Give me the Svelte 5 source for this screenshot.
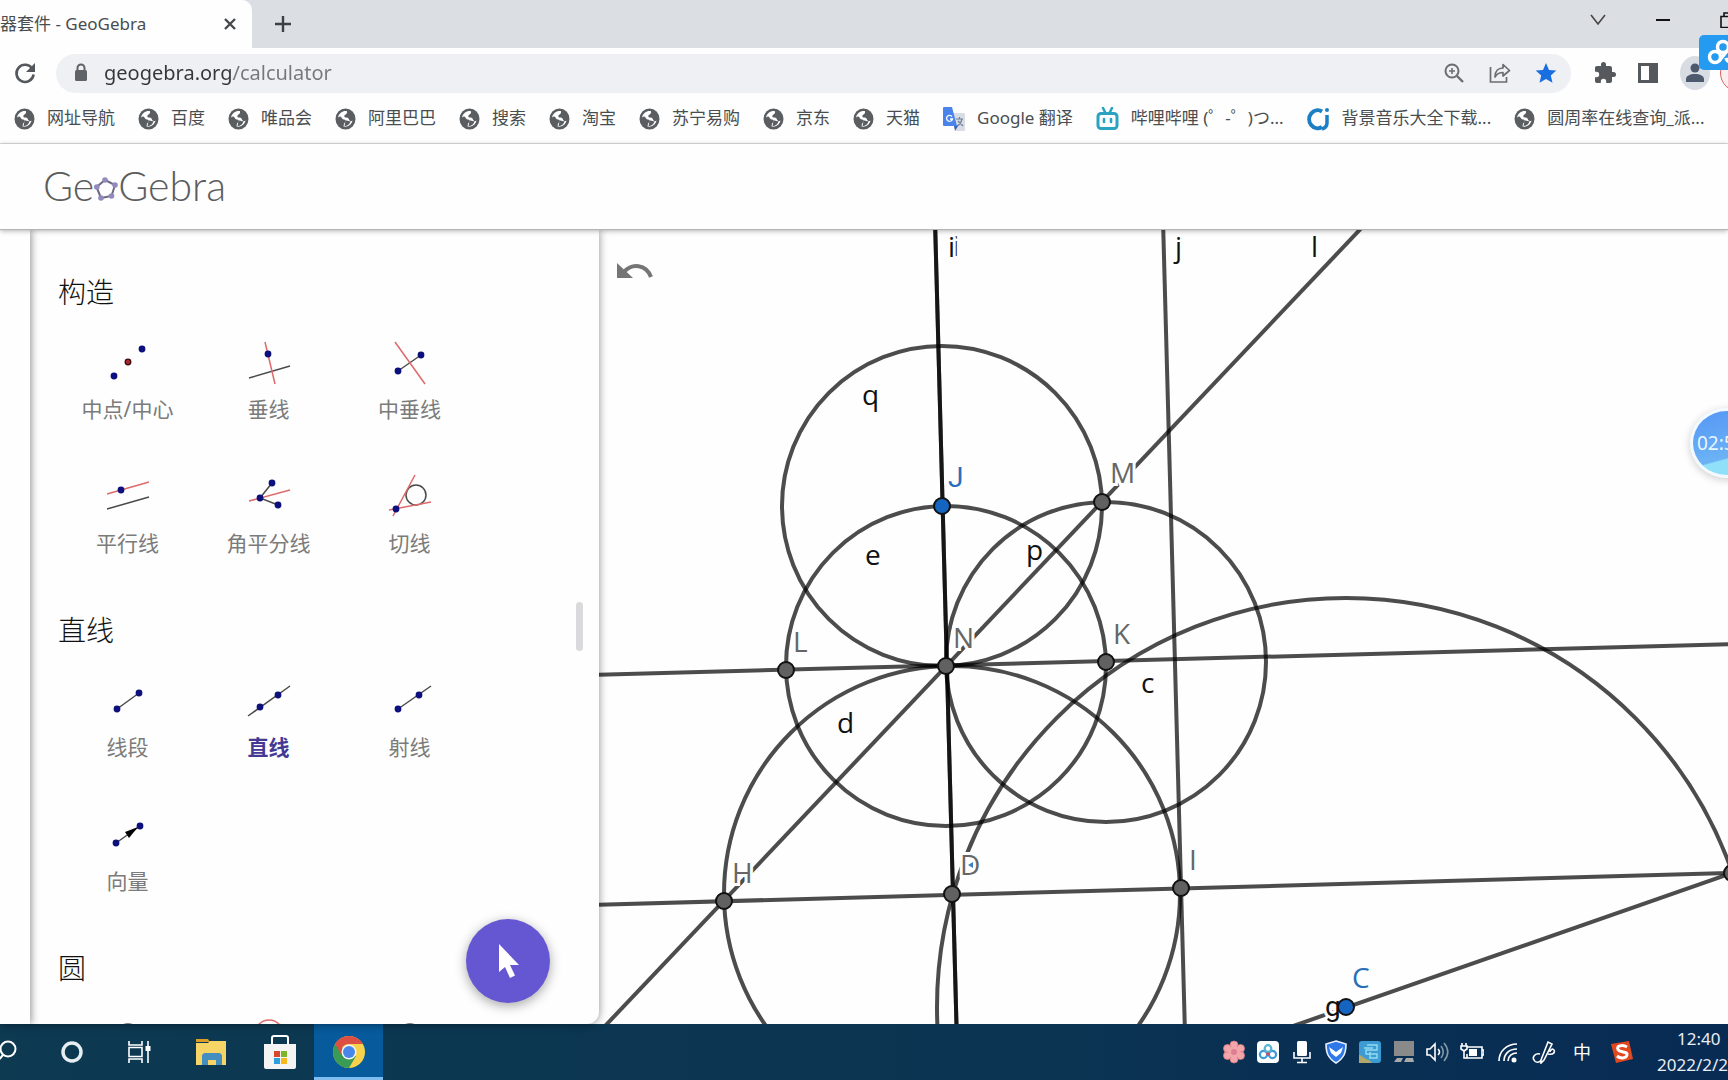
<script>
  const bookmarks = [
    { title: "网址导航" },
    { title: "百度" },
    { title: "唯品会" },
    { title: "阿里巴巴" },
    { title: "搜索" },
    { title: "淘宝" },
    { title: "苏宁易购" },
    { title: "京东" },
    { title: "天猫" },
    { title: "Google 翻译", icon: "translate" },
    { title: "哔哩哔哩 (゜-゜)つ...", icon: "bili" },
    { title: "背景音乐大全下载...", icon: "ci" },
    { title: "圆周率在线查询_派..." },
  ];

  // every tool icon is drawn on a 48x48 grid
  const sections = [
    {
      name: "构造",
      tools: [
        { name: "中点/中心", dots: [[10, 38], [38, 11]], mid: [24, 24] },
        { name: "垂线", dark: ["M4 40 45 28"], red: ["M20 4 30 46"], dots: [[23, 16]] },
        { name: "中垂线", dark: ["M12 33 35 17"], red: ["M9 4 39 46"], dots: [[12, 33], [35, 17]] },
        { name: "平行线", dark: ["M3 37 45 25"], red: ["M3 22 45 10"], dots: [[17, 18]] },
        { name: "角平分线", dark: ["M27 11 15 26 33 33"], red: ["M4 29 45 18"], dots: [[15, 26], [27, 11], [33, 33]] },
        { name: "切线", dark: ["M20 23a10 10 0 1 0 20 0a10 10 0 1 0-20 0"], red: ["M29 3 7 44", "M3 38 45 30"], dots: [[10, 37]] },
      ],
    },
    {
      name: "直线",
      tools: [
        { name: "线段", dark: ["M13 33 35 17"], dots: [[13, 33], [35, 17]] },
        { name: "直线", active: true, dark: ["M3 40 45 10"], dots: [[15, 31], [33, 19]] },
        { name: "射线", dark: ["M12 33 45 10"], dots: [[12, 33], [33, 19]] },
        { name: "向量", dark: ["M12 33 36 16"], arrow: "M34 17 21 22 25 28z", dots: [[12, 33], [36, 16]] },
      ],
    },
    {
      name: "圆",
      tools: [
        { dark: ["M10 24a14 14 0 1 0 28 0a14 14 0 1 0-28 0"] },
        { red: ["M10 20a14 14 0 1 0 28 0a14 14 0 1 0-28 0"] },
        { dark: ["M10 24a14 14 0 1 0 28 0a14 14 0 1 0-28 0"] },
      ],
    },
  ];

  const circles = [
    { name: "q", x: 942, y: 506, r: 160 },
    { name: "e", x: 946, y: 666, r: 160 },
    { name: "p", x: 1106, y: 662, r: 160 },
    { name: "d", x: 952, y: 894, r: 228 },
    { name: "c", x: 1346, y: 1007, r: 409 },
  ];

  const lines = [
    [935, 220, 957, 1044],
    [935, 220, 957, 1044],
    [1163, 220, 1185, 1034],
    [1369, 220, 588, 1044],
    [590, 675, 1740, 644],
    [590, 905, 1732, 873],
    [1732, 873, 1230, 1048],
  ];

  const labels = [
    { t: "i", x: 952, y: 256 },
    { t: "i", x: 948, y: 257 },
    { t: "j", x: 1175, y: 257 },
    { t: "l", x: 1311, y: 257 },
    { t: "q", x: 862, y: 405 },
    { t: "e", x: 865, y: 565 },
    { t: "p", x: 1026, y: 560 },
    { t: "d", x: 837, y: 733 },
    { t: "c", x: 1141, y: 693 },
    { t: "g", x: 1325, y: 1016, kind: "round" },
    { t: "J", x: 948, y: 487, kind: "blue round" },
    { t: "C", x: 1352, y: 988, kind: "blue" },
    { t: "M", x: 1110, y: 483, kind: "gray" },
    { t: "N", x: 953, y: 648, kind: "gray" },
    { t: "K", x: 1113, y: 644, kind: "gray" },
    { t: "L", x: 793, y: 652, kind: "gray" },
    { t: "H", x: 732, y: 883, kind: "gray" },
    { t: "D", x: 960, y: 875, kind: "gray" },
    { t: "I", x: 1189, y: 870, kind: "gray" },
  ];

  const points = [
    { x: 942, y: 506, free: true },
    { x: 1346, y: 1007, free: true },
    { x: 1102, y: 502 },
    { x: 946, y: 666 },
    { x: 1106, y: 662 },
    { x: 786, y: 670 },
    { x: 952, y: 894 },
    { x: 724, y: 901 },
    { x: 1181, y: 888 },
    { x: 1732, y: 873 },
  ];

  let url = "geogebra.org/calculator";
</script>

<div class="screen">
  <div class="tabs">
    <div class="tab">
      <span>器套件 - GeoGebra</span>
      <button aria-label="关闭标签页">
        <svg width="16" height="16" viewBox="0 0 16 16"><path d="M3 3l10 10M13 3L3 13" stroke="#45494d" stroke-width="2.400" /></svg>
      </button>
    </div>
    <button class="new-tab" aria-label="新标签页">
      <svg width="18" height="18" viewBox="0 0 18 18"><path d="M9 1v16M1 9h16" stroke="#3c4043" stroke-width="2.400" /></svg>
    </button>
    <div class="window-buttons">
      <button aria-label="搜索标签页"><svg width="16" height="16" viewBox="0 0 16 16"><path d="M1 3l7 9 7-9" fill="none" stroke="#444" stroke-width="1.6" /></svg></button>
      <button aria-label="最小化"><svg width="16" height="16" viewBox="0 0 16 16"><path d="M1 8h14" stroke="#111" stroke-width="2" /></svg></button>
      <button aria-label="还原"><svg width="16" height="16" viewBox="0 0 16 16"><path d="M1 4.500h11v11H1zM4 4V1h11v11h-3" fill="none" stroke="#111" stroke-width="1.6" /></svg></button>
    </div>
  </div>

  <div class="toolbar">
    <button aria-label="重新加载">
      <svg width="24" height="24" viewBox="0 0 24 24"><path d="M19.500 8A8.600 8.600 0 1 0 20.600 13.500" fill="none" stroke="#54585c" stroke-width="2.600" /><path d="M22 2v9h-9z" fill="#54585c" /></svg>
    </button>
    <div class="omnibox">
      <svg width="14" height="20" viewBox="0 0 14 20"><path d="M3.500 9V5a3.500 3.500 0 0 1 7 0v4" fill="none" stroke="#5f6368" stroke-width="2" /><rect x="1" y="7" width="12" height="11" rx="1.500" fill="#5f6368" /></svg>
      <input aria-label="地址" bind:value={url} />
      <button aria-label="缩放">
        <svg width="22" height="22" viewBox="0 0 22 22" fill="none" stroke="#6a6e73" stroke-width="2"><circle cx="9" cy="9" r="6.500" /><path d="M14 14l6 6" stroke-width="2.400" /><path d="M9 6v6M6 9h6" stroke-width="1.600" /></svg>
      </button>
      <button aria-label="分享">
        <svg width="24" height="22" viewBox="0 0 24 22" fill="none" stroke="#6a6e73" stroke-width="1.700"><path d="M2.500 5v15h16v-5" /><path d="M7 15c0-6 3-9 8-9V2.500L21.500 8.500 15 14v-3.500c-4 0-6 1-8 4.500z" stroke-linejoin="round" /></svg>
      </button>
      <button aria-label="为此标签页添加书签">
        <svg width="22" height="22" viewBox="0 0 22 22"><path d="M11 1l3 7 7.300.600-5.500 4.900 1.700 7.300L11 17l-6.500 3.800 1.700-7.300L.7 8.600 8 8z" fill="#1a6fe0" /></svg>
      </button>
    </div>
    <button aria-label="扩展程序">
      <svg width="24" height="24" viewBox="0 0 24 24"><path d="M20.500 11H19V7c0-1.100-.900-2-2-2h-4V3.500a2.500 2.500 0 0 0-5 0V5H4c-1.100 0-2 .900-2 2v3.800h1.500a2.700 2.700 0 0 1 0 5.400H2V20c0 1.100.900 2 2 2h3.800v-1.500a2.700 2.700 0 0 1 5.400 0V22H17c1.100 0 2-.900 2-2v-4h1.500a2.500 2.500 0 0 0 0-5z" fill="#55595e" /></svg>
    </button>
    <button aria-label="侧边栏">
      <svg width="22" height="22" viewBox="0 0 22 22"><path d="M1 1h20v20H1zM4 4v14h8V4z" fill="#55595e" fill-rule="evenodd" /></svg>
    </button>
    <button class="avatar" aria-label="用户">
      <svg width="20" height="20" viewBox="0 0 20 20" fill="#4d5a6e"><circle cx="10" cy="5" r="4.500" /><path d="M1 19v-3c0-3 4-5 9-5s9 2 9 5v3z" /></svg>
    </button>
    <span class="update"></span>
  </div>

  <nav class="bookmarks">
    {#each bookmarks as mark}
      <a href="#top">
        {#if mark.icon === "translate"}
          <svg width="22" height="24" viewBox="0 0 22 24"><path d="M9 6h12a1 1 0 0 1 1 1v16a1 1 0 0 1-1 1h-8z" fill="#d9dde3" /><path d="M1 0h8l5 19H1a1 1 0 0 1-1-1V1a1 1 0 0 1 1-1z" fill="#4a83ea" /><path d="M11 19h4l-3 5z" fill="#3360c0" /><path d="M9 9.500A3 3 0 1 0 9.500 12H7" fill="none" stroke="#fff" stroke-width="1.300" /><path d="M13 12h7M16.500 10v2M19 12c-1 4-3 6-5 7M15 14l5 5" fill="none" stroke="#6d7f9c" stroke-width="1.200" /></svg>
        {:else if mark.icon === "bili"}
          <svg width="23" height="24" viewBox="0 0 23 24" fill="none" stroke="#2ba3c0" stroke-width="3"><rect x="2" y="6.500" width="19" height="15" rx="3" /><path d="M7 1l2 4M16 1l-2 4M8 12v3M15 12v3" stroke-width="2.600" stroke-linecap="round" /></svg>
        {:else if mark.icon === "ci"}
          <svg width="23" height="24" viewBox="0 0 23 24" fill="none" stroke="#1c7fc4" stroke-width="4"><path d="M15 4.500A8.500 9 0 1 0 15 20" /><path d="M20 8v8c0 3-2 5-5 6" stroke-width="3.500" /><circle cx="20" cy="3" r="2" fill="#1c7fc4" stroke="none" /></svg>
        {:else}
          <svg width="21" height="22" viewBox="0 0 21 22"><ellipse cx="10.500" cy="11" rx="10" ry="10.500" fill="#5a5e61" /><g fill="#fff"><path d="M12 3.200C8 2.500 4 5 3 9.500c1.500-1 2-1.200 3-.500 1 .700 1 2.500 3 2.500 1.500 0 2 1 1.500 2.500L9 15.500l-.500 3c4 .800 8-1.500 9-6-1.500 1-3 .500-3.500-1-.500-1.600-1.500-2-3-2-1.300 0-2-.600-1.500-2C10 6 12.500 6.500 12 3.200z" /></g><path d="M10.500 12.500c2 0 3 1 5 .500-.500 3-3 5-6 5l.500-2.500z" fill="#5a5e61" /></svg>
        {/if}
        <span>{mark.title}</span>
      </a>
    {/each}
  </nav>

  <header>
    <div class="logo">
      Ge<svg width="24" height="24" viewBox="0 0 24 24" aria-label="o"><path d="M11 3l10 5-3.500 11L7 21 2.500 10z" fill="none" stroke="#6c6a80" stroke-width="2" /><g fill="#9389bd"><circle cx="11" cy="3" r="2.800" /><circle cx="21" cy="8" r="2.800" /><circle cx="17.500" cy="19" r="2.800" /><circle cx="7" cy="21" r="2.800" /><circle cx="2.800" cy="10" r="2.800" /></g></svg>Gebra
    </div>
  </header>

  <main>
    <div class="rail"></div>
    <aside>
      {#each sections as section}
        <h2>{section.name}</h2>
        <div class="tools">
          {#each section.tools as tool}
            <button class:active={tool.active} aria-label={tool.name ?? section.name}>
              <svg width="48" height="48" viewBox="0 0 48 48" fill="none">
                {#each tool.dark ?? [] as d}
                  <path {d} stroke="#4a4a4a" stroke-width="1.500" />
                {/each}
                {#each tool.red ?? [] as d}
                  <path {d} stroke="#e0696b" stroke-width="1.500" />
                {/each}
                {#if tool.arrow}
                  <path d={tool.arrow} fill="#000" />
                {/if}
                {#each tool.dots ?? [] as [cx, cy]}
                  <circle {cx} {cy} r="3.400" fill="#0d0f7c" />
                {/each}
                {#if tool.mid}
                  <circle cx={tool.mid[0]} cy={tool.mid[1]} r="2.800" fill="#a8282c" stroke="#3b0c10" stroke-width="1.300" />
                {/if}
              </svg>
              {#if tool.name}
                <span>{tool.name}</span>
              {/if}
            </button>
          {/each}
        </div>
      {/each}
      <div class="thumb"></div>
      <button class="fab" aria-label="移动">
        <svg width="24" height="36" viewBox="0 0 24 36"><path d="M3 1v28l6-5 5 11 5-2.500-5-10.500h9z" fill="#fff" /></svg>
      </button>
    </aside>

    <section class="canvas">
      <svg class="drawing" viewBox="599 230 1129 794" preserveAspectRatio="xMinYMin slice">
        <g class="strokes">
          {#each lines as [x1, y1, x2, y2]}
            <line {x1} {y1} {x2} {y2} />
          {/each}
          {#each circles as c}
            <circle cx={c.x} cy={c.y} r={c.r} />
          {/each}
        </g>
        {#each labels as label}
          <text x={label.x} y={label.y} class={label.kind}>{label.t}</text>
        {/each}
        <path d="M968 865l5-3v6z" fill="#3b7fc4" />
        {#each points as p}
          <circle class="point" class:free={p.free} cx={p.x} cy={p.y} r="8" />
        {/each}
      </svg>
      <button class="undo" aria-label="撤销">
        <svg width="38" height="20" viewBox="0 0 38 20"><path d="M1 1v15h16z" fill="#757575" /><path d="M8 10C16 1 30 2 35 15" fill="none" stroke="#757575" stroke-width="4" /></svg>
      </button>
    </section>
  </main>

  <footer>
    <div class="apps">
      <button aria-label="搜索"><svg width="34" height="34" viewBox="0 0 34 34" fill="none" stroke="#fff" stroke-width="2"><circle cx="21" cy="14" r="7.500" /><path d="M16 20l-8 9" /></svg></button>
      <button aria-label="Cortana"><svg width="34" height="34" viewBox="0 0 34 34"><circle cx="16" cy="17" r="9" fill="none" stroke="#e6eef3" stroke-width="3.500" /></svg></button>
      <button aria-label="任务视图"><svg width="34" height="34" viewBox="0 0 34 34" fill="none" stroke="#fff" stroke-width="1.600"><path d="M4 6v4h13V6M4 12.500h13v9H4zM4 28v-4h13v4M23 6v22" /><path d="M20.500 11h5v5h-5z" fill="#fff" stroke="none" /></svg></button>
      <button aria-label="文件资源管理器"><svg width="34" height="34" viewBox="0 0 34 34"><path d="M2 4h12l2 3H2z" fill="#dc9d25" /><path d="M2 8h12l2-2h16v24H2z" fill="#f7d466" /><path d="M8 30V20l2-2h16l2 2v10h-6v-5h-8v5z" fill="#458fc0" /></svg></button>
      <button aria-label="Microsoft Store"><svg width="34" height="36" viewBox="0 0 34 36"><path d="M9 12V4a2 2 0 0 1 2-2h12a2 2 0 0 1 2 2v8" fill="none" stroke="#fff" stroke-width="2" /><path d="M1 10h32v23a2 2 0 0 1-2 2H3a2 2 0 0 1-2-2z" fill="#f4f4f4" /><path d="M11 17h6v6h-6z" fill="#d8472c" /><path d="M18 17h6v6h-6z" fill="#7fb52a" /><path d="M11 24h6v6h-6z" fill="#2ba0dc" /><path d="M18 24h6v6h-6z" fill="#f4b91d" /></svg></button>
      <button class="running" aria-label="Chrome">
        <svg width="34" height="34" viewBox="0 0 34 34"><circle cx="17" cy="17" r="16" fill="#f8d24b" /><path d="M17 17L3.100 9A16 16 0 0 0 17 33l7-12z" fill="#3a9b55" /><path d="M3.100 9A16 16 0 0 1 30.900 9H17a8 8 0 0 0-7 12z" fill="#dd4f42" /><circle cx="17" cy="17" r="7.500" fill="#f4f4f4" /><circle cx="17" cy="17" r="6" fill="#4886ea" /></svg>
      </button>
    </div>
    <div class="tray">
      <svg viewBox="0 0 24 24"><g fill="#f2a6aa" stroke="#d97880" stroke-width=".8"><circle cx="12" cy="5" r="4" /><circle cx="18.500" cy="8.500" r="4" /><circle cx="18.500" cy="15.500" r="4" /><circle cx="12" cy="19" r="4" /><circle cx="5.500" cy="15.500" r="4" /><circle cx="5.500" cy="8.500" r="4" /></g><circle cx="12" cy="12" r="6" fill="#f2a6aa" /><circle cx="12" cy="12" r="3" fill="#dc7f93" /></svg>
      <svg viewBox="0 0 24 24"><rect x="1" y="1" width="22" height="22" rx="4" fill="#fff" /><g fill="none" stroke-width="2.200"><circle cx="7.500" cy="14.500" r="3.600" stroke="#3a9dd8" /><circle cx="16.500" cy="14.500" r="3.600" stroke="#3a9dd8" /><circle cx="12" cy="8.500" r="3.300" stroke="#58b4cf" /></g><circle cx="12" cy="14" r="1.800" fill="#d9485a" /></svg>
      <svg viewBox="0 0 24 24"><rect x="7" y="1" width="10" height="15" rx="1.500" fill="#fff" /><path d="M4 12v6h16v-6M12 18v4M7 22.500h10" fill="none" stroke="#fff" stroke-width="1.600" /></svg>
      <svg viewBox="0 0 24 24"><path d="M12 1l10 3c0 9-2 14-10 19C4 18 2 13 2 4z" fill="#2e78e8" stroke="#e9f1ff" stroke-width="1.600" /><path d="M5 7l7 5 7-5-2 6-5 4-5-4z" fill="#fff" /></svg>
      <svg viewBox="0 0 24 24"><rect x="1" y="1" width="22" height="22" rx="3" fill="#3d9bd3" /><path d="M1 23V15c3 0 5 4 10 5l3 3z" fill="#b3a869" /><path d="M9 5h10v5H8v4h11v4h-8M6 8h9M12 12v6" fill="none" stroke="#93dcf3" stroke-width="1.400" /></svg>
      <svg viewBox="0 0 24 24"><path d="M2 1h20v15H2z" fill="#8a8a8a" /><path d="M2 22l3-4h6l-2 4zM12 22l2-4h7l1 4z" fill="#aaa" /></svg>
      <svg viewBox="0 0 24 24" fill="none" stroke="#fff" stroke-width="1.600"><path d="M1 9h3l5-5v16l-5-5H1z" /><path d="M12 9c2 2 2 4 0 6" /><path d="M15 6c3 4 3 8 0 12M18 3c5 6 5 12 0 18" stroke-opacity=".5" /></svg>
      <svg viewBox="0 0 24 24" fill="none" stroke="#fff" stroke-width="1.600"><path d="M7 7h15v11H7v-4" /><path d="M22 10h2v5h-2" /><path d="M9 9h8v7H9z" fill="#fff" stroke="none" /><path d="M2 3v3M6 3v3M1 6h6v3L4 11 1 9zM4 11v7h3" /></svg>
      <svg viewBox="0 0 24 24" fill="none" stroke="#fff" stroke-width="1.700"><path d="M3 21C3 11 11 4 21 4M8 21C8 14 13 9 21 9M12 21c0-5 4-8 9-8" /><circle cx="18" cy="20" r="2.500" fill="#fff" stroke="none" /></svg>
      <svg viewBox="0 0 24 24" fill="none" stroke="#fff" stroke-width="1.600"><path d="M9 20L16 2l4 2-8 16-3 3zM8 14c-5-1-8 3-6 6 2 4 6 2 7 0M16 14c6 1 7-2 6-4s-4 0-4 2" /></svg>
      <span class="ime">中</span>
      <svg viewBox="0 0 24 24"><path d="M1 4l18-3 4 18-17 4z" fill="#e2481f" /><path d="M17 7C12 4 6 6 8 9.500s10 1.500 9 5.500-7 3.500-10 1" fill="none" stroke="#fff" stroke-width="3" /></svg>
      <div class="clock">
        <time>12:40</time>
        <span>2022/2/2</span>
      </div>
    </div>
  </footer>

  <div class="cloud">
    <svg width="36" height="28" viewBox="0 0 36 28" fill="none" stroke="#fff" stroke-width="3.500"><circle cx="9" cy="18" r="5.500" /><circle cx="17" cy="8" r="5.500" /><path d="M13 22l8-10M20 19c1 4 5 5 9 4" /></svg>
  </div>
  <div class="timer">02:5</div>
</div>

<style>
  :global(body) {
    margin: 0;
    background: #fdfefd;
  }
  .screen {
    position: relative;
    display: flex;
    flex-direction: column;
    height: 100vh;
    overflow: hidden;
    font-family: "Noto Sans", "Noto Sans CJK SC", sans-serif;
    color: #4a4d50;
  }
  button {
    display: flex;
    align-items: center;
    justify-content: center;
    flex-shrink: 0;
    padding: 0;
    border: 0;
    background: none;
    font-family: inherit;
    cursor: pointer;
  }
  svg {
    flex-shrink: 0;
  }

  .tabs {
    display: flex;
    flex-shrink: 0;
    height: 48px;
    background: #dbdfe4;
  }
  .tab {
    display: flex;
    align-items: center;
    justify-content: space-between;
    width: 252px;
    box-sizing: border-box;
    padding-right: 14px;
    border-radius: 0 10px 0 0;
    background: #fdfefd;
    font-size: 17px;
    line-height: 24px;
    white-space: nowrap;
  }
  .tab span {
    padding-bottom: 1px;
  }
  .new-tab {
    width: 62px;
    border-radius: 0 0 0 10px;
  }
  .window-buttons {
    display: flex;
    align-items: center;
    gap: 49px;
    height: 40px;
    margin-left: auto;
    margin-right: -8px;
  }

  .toolbar {
    display: flex;
    align-items: center;
    flex-shrink: 0;
    gap: 22px;
    height: 50px;
    padding-left: 13px;
    background: #fdfefd;
  }
  .toolbar > button:first-child {
    margin-right: -3px;
  }
  .omnibox {
    display: flex;
    align-items: center;
    flex: 1;
    gap: 23px;
    height: 39px;
    min-width: 0;
    box-sizing: border-box;
    padding: 0 14px 0 18px;
    border-radius: 20px;
    background: #eef0f3;
  }
  .omnibox input {
    flex: 1;
    min-width: 0;
    margin-left: -7px;
    padding: 0;
    border: 0;
    outline: 0;
    font: 20px/28px "Noto Sans", sans-serif;
    color: transparent;
    background: linear-gradient(90deg, #33373b 129px, #74787c 129px);
    background-clip: text;
  }
  .omnibox + button {
    margin-right: -2px;
  }
  .avatar {
    width: 30px;
    height: 34px;
    margin-left: -1px;
    border-radius: 50%;
    background: #d8dde4;
  }
  .update {
    flex-shrink: 0;
    width: 36px;
    height: 36px;
    margin: 0 -30px 0 -12px;
    border: 1px solid #d8635f;
    border-radius: 50%;
    background: #fbeeee;
  }

  .bookmarks {
    display: flex;
    align-items: center;
    flex-shrink: 0;
    gap: 23px;
    height: 46px;
    box-sizing: border-box;
    padding: 0 0 3px 14px;
    border-bottom: 1px solid #dcdfdf;
    white-space: nowrap;
  }
  .bookmarks a {
    display: flex;
    align-items: center;
    gap: 12px;
    font-size: 17px;
    line-height: 24px;
    color: #4a4d50;
    text-decoration: none;
  }
  .bookmarks span {
    padding-bottom: 2px;
  }

  header {
    position: relative;
    z-index: 2;
    display: flex;
    align-items: center;
    flex-shrink: 0;
    height: 85px;
    padding-left: 43px;
    border-bottom: 1px solid #b4b4b4;
    background: #fdfefd;
    box-shadow: 0 1px 5px rgba(0, 0, 0, 0.3);
  }
  .logo {
    display: flex;
    align-items: center;
    padding-bottom: 2px;
    font: 300 41px/44px Lato, sans-serif;
    color: #5c5c5c;
  }
  .logo svg {
    margin-top: 6px;
  }

  main {
    display: flex;
    flex: 1;
    min-height: 0;
  }
  .rail {
    position: relative;
    z-index: 1;
    flex-shrink: 0;
    width: 30px;
    background: #fdfefd;
    box-shadow: 1px 0 8px rgba(0, 0, 0, 0.45);
  }
  aside {
    position: relative;
    flex-shrink: 0;
    width: 569px;
    box-sizing: border-box;
    padding: 27px 0 0 28px;
    overflow: hidden;
    border-radius: 0 0 12px 0;
    background: #fdfefd;
    box-shadow: 0 0 8px rgba(0, 0, 0, 0.45);
  }
  h2 {
    margin: 0;
    font-size: 28px;
    line-height: 70px;
    font-weight: 300;
    color: #111;
  }
  .tools {
    display: grid;
    grid-template-columns: repeat(3, 141px);
    margin-left: -1px;
  }
  .tools button {
    flex-direction: column;
    justify-content: flex-start;
    gap: 9px;
    height: 134px;
    padding-top: 11px;
    font-size: 21px;
    line-height: 28px;
    color: #7b7b7b;
  }
  .tools .active {
    font-weight: 700;
    color: #443a94;
  }
  .thumb {
    position: absolute;
    top: 372px;
    right: 16px;
    width: 7px;
    height: 49px;
    border-radius: 4px;
    background: #dadadc;
  }
  .fab {
    position: absolute;
    right: 49px;
    bottom: 21px;
    width: 84px;
    height: 84px;
    border-radius: 50%;
    background: #6557d2;
    box-shadow: 0 3px 12px rgba(0, 0, 0, 0.35);
  }

  .canvas {
    position: relative;
    z-index: -1;
    flex: 1;
    min-width: 0;
    overflow: hidden;
    background: #fdfefd;
  }
  .drawing {
    display: block;
    width: 100%;
    height: 100%;
  }
  .strokes {
    fill: none;
    stroke: #000;
    stroke-opacity: 0.7;
    stroke-width: 4;
  }
  .drawing text {
    font: 28px "Open Sans", sans-serif;
    fill: #111;
    stroke: #fdfefd;
    stroke-width: 6;
    paint-order: stroke;
  }
  .drawing text.round {
    font-family: Roboto, sans-serif;
  }
  .drawing text.gray {
    fill: #666;
  }
  .drawing text.blue {
    fill: #2a6db8;
  }
  .point {
    fill: #616161;
    stroke: #111;
    stroke-width: 2;
  }
  .free {
    fill: #1565c0;
  }
  .undo {
    position: absolute;
    top: 32px;
    left: 17px;
  }

  footer {
    display: flex;
    flex-shrink: 0;
    justify-content: space-between;
    height: 56px;
    background: linear-gradient(90deg, #0d3951, #0b3551 50%, #082b54);
  }
  .apps {
    display: flex;
    margin-left: -31px;
  }
  .apps button {
    width: 69px;
  }
  .apps .running {
    box-sizing: border-box;
    border-top: 3px solid #075a9b;
    border-bottom: 3px solid #7fbdf0;
    background: #075a9b;
  }
  .tray {
    display: flex;
    align-items: center;
    gap: 10px;
  }
  .tray svg {
    width: 24px;
    height: 24px;
  }
  .tray svg:nth-of-type(n + 9) {
    margin-left: 2px;
  }
  .ime {
    width: 24px;
    margin: 0 4px;
    font-size: 18px;
    line-height: 24px;
    text-align: center;
    color: #fff;
  }
  .clock {
    display: flex;
    flex-direction: column;
    width: 71px;
    margin-left: 13px;
    font-size: 17px;
    line-height: 26px;
    color: #e9eef4;
  }
  time {
    padding-left: 20px;
  }

  .cloud {
    position: absolute;
    top: 35px;
    right: -7px;
    z-index: 3;
    display: flex;
    align-items: center;
    width: 36px;
    height: 35px;
    padding-left: 7px;
    box-sizing: border-box;
    overflow: hidden;
    border-radius: 5px;
    background: #249bf0;
  }
  .timer {
    position: absolute;
    top: 408px;
    right: -36px;
    z-index: 3;
    width: 64px;
    height: 64px;
    padding-left: 4px;
    box-sizing: content-box;
    border: 3px solid #f2f9ff;
    border-radius: 50%;
    background: linear-gradient(165deg, #5596f5, #6cb3f5 68%, #8fe0f8 70%);
    box-shadow: 0 2px 8px rgba(0, 0, 0, 0.2);
    font-size: 19px;
    line-height: 64px;
    color: #e8f6ff;
  }
</style>
